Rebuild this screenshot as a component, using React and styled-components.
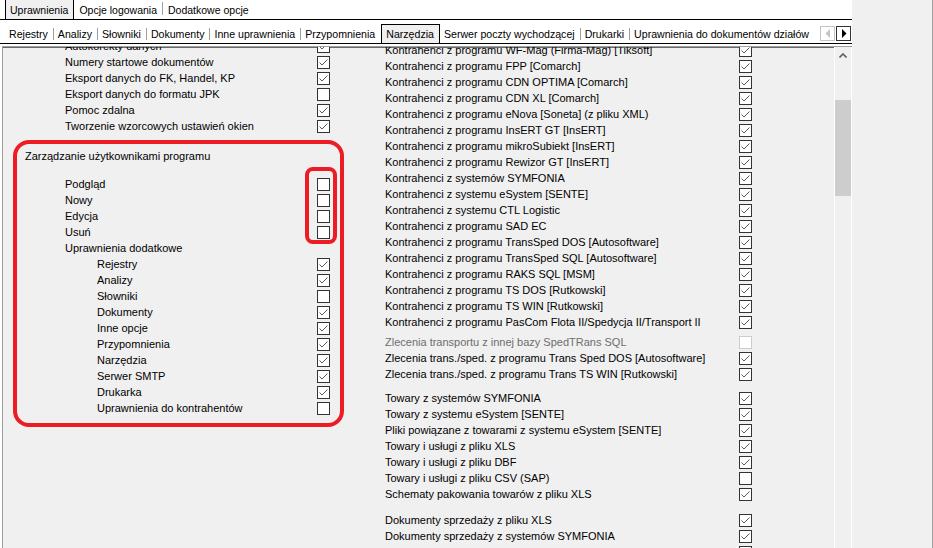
import React from "react";
import styled, { createGlobalStyle } from "styled-components";

const GlobalStyle = createGlobalStyle`
  html, body { margin: 0; padding: 0; background: #fff; }
  body {
    font-family: "Liberation Sans", Arial, sans-serif;
    font-size: 11px;
    color: #000;
  }
  #root { width: 933px; height: 548px; overflow: hidden; }
`;

const topTabs = ["Uprawnienia", "Opcje logowania", "Dodatkowe opcje"];
const subTabs = [
    "Rejestry",
    "Analizy",
    "Słowniki",
    "Dokumenty",
    "Inne uprawnienia",
    "Przypomnienia",
    "Narzędzia",
    "Serwer poczty wychodzącej",
    "Drukarki",
    "Uprawnienia do dokumentów działów",
];

const leftTop = [
    ["Autokorekty danych", true],
    ["Numery startowe dokumentów", true],
    ["Eksport danych do FK, Handel, KP", true],
    ["Eksport danych do formatu JPK", false],
    ["Pomoc zdalna", true],
    ["Tworzenie wzorcowych ustawień okien", true],
];

const basicRights = ["Podgląd", "Nowy", "Edycja", "Usuń"];

const extraRights = [
    ["Rejestry", true],
    ["Analizy", true],
    ["Słowniki", false],
    ["Dokumenty", true],
    ["Inne opcje", true],
    ["Przypomnienia", true],
    ["Narzędzia", true],
    ["Serwer SMTP", true],
    ["Drukarka", true],
    ["Uprawnienia do kontrahentów", false],
];

const K = "Kontrahenci z programu ";
const rightGroups = [
    {
        gap: 0,
        rows: [
            [K + "WF-Mag (Firma-Mag) [Tiksoft]", true],
            [K + "FPP [Comarch]", true],
            [K + "CDN OPTIMA [Comarch]", true],
            [K + "CDN XL [Comarch]", true],
            [K + "eNova [Soneta] (z pliku XML)", true],
            [K + "InsERT GT [InsERT]", true],
            [K + "mikroSubiekt [InsERT]", true],
            [K + "Rewizor GT [InsERT]", true],
            ["Kontrahenci z systemów SYMFONIA", true],
            ["Kontrahenci z systemu eSystem [SENTE]", true],
            ["Kontrahenci z systemu CTL Logistic", true],
            [K + "SAD EC", true],
            [K + "TransSped DOS [Autosoftware]", true],
            [K + "TransSped SQL [Autosoftware]", true],
            [K + "RAKS SQL [MSM]", true],
            [K + "TS DOS [Rutkowski]", true],
            [K + "TS WIN [Rutkowski]", true],
            [K + "PasCom Flota II/Spedycja II/Transport II", true],
        ],
    },
    {
        gap: 4,
        rows: [
            ["Zlecenia transportu z innej bazy SpedTRans SQL", false, true],
            ["Zlecenia trans./sped. z programu Trans Sped DOS [Autosoftware]", true],
            ["Zlecenia trans./sped. z programu Trans TS WIN [Rutkowski]", true],
        ],
    },
    {
        gap: 8,
        rows: [
            ["Towary z systemów SYMFONIA", true],
            ["Towary z systemu eSystem [SENTE]", true],
            ["Pliki powiązane z towarami z systemu eSystem [SENTE]", true],
            ["Towary i usługi z pliku XLS", true],
            ["Towary i usługi z pliku DBF", true],
            ["Towary i usługi z pliku CSV (SAP)", false],
            ["Schematy pakowania towarów z pliku XLS", true],
        ],
    },
    {
        gap: 10,
        rows: [
            ["Dokumenty sprzedaży z pliku XLS", true],
            ["Dokumenty sprzedaży z systemów SYMFONIA", true],
            ["Dokumenty sprzedaży z systemu eSystem [SENTE]", true],
        ],
    },
];

const Check = ({ checked, disabled }) => (
    <Box $disabled={disabled}>
        {checked && (
            <svg width="11" height="11" viewBox="0 0 11 11">
                <polyline
                    points="1.5,5.5 4,8 9.5,2.5"
                    fill="none"
                    stroke="#5a5a5a"
                    strokeWidth="1"
                />
            </svg>
        )}
    </Box>
);

const OptionRow = ({ label, indent, checked, disabled, noBox }) => (
    <Row $indent={indent} $disabled={disabled}>
        <Label>{label}</Label>
        {!noBox && <Check checked={checked} disabled={disabled} />}
    </Row>
);

const App = () => {
    return (
        <>
            <GlobalStyle />
            <Window>
                <Main>
                    <TopTabs>
                        {topTabs.map((t, i) => (
                            <React.Fragment key={t}>
                                {i > 1 && <Sep $tall />}
                                <Tab $active={i === 0}>{t}</Tab>
                            </React.Fragment>
                        ))}
                    </TopTabs>
                    <SubTabs>
                        <SubTabList>
                            {subTabs.map((t, i) => {
                                const active = t === "Narzędzia";
                                const prevActive = subTabs[i - 1] === "Narzędzia";
                                return (
                                    <React.Fragment key={t}>
                                        {i > 0 && !active && !prevActive && <Sep />}
                                        <SubTab $active={active}>{t}</SubTab>
                                    </React.Fragment>
                                );
                            })}
                        </SubTabList>
                        <Arrows>
                            <ArrowBtn $disabled>
                                <svg width="6" height="9" viewBox="0 0 6 9">
                                    <polygon points="5,0 5,9 0.5,4.5" fill="#c4c4c4" />
                                </svg>
                            </ArrowBtn>
                            <ArrowBtn>
                                <svg width="6" height="9" viewBox="0 0 6 9">
                                    <polygon points="1,0 1,9 5.5,4.5" fill="#000" />
                                </svg>
                            </ArrowBtn>
                        </Arrows>
                    </SubTabs>
                    <Panel>
                        <LeftCol>
                            {leftTop.map(([l, c]) => (
                                <OptionRow key={l} label={l} indent={62} checked={c} />
                            ))}
                            <Group>
                                <Header>Zarządzanie użytkownikami programu</Header>
                                {basicRights.map((l) => (
                                    <OptionRow key={l} label={l} indent={62} checked={false} />
                                ))}
                                <OptionRow label="Uprawnienia dodatkowe" indent={62} noBox />
                                {extraRights.map(([l, c]) => (
                                    <OptionRow key={l} label={l} indent={94} checked={c} />
                                ))}
                                <BigMark />
                                <SmallMark />
                            </Group>
                        </LeftCol>
                        <RightCol>
                            {rightGroups.map((g, gi) => (
                                <Block key={gi} $gap={g.gap}>
                                    {g.rows.map(([l, c, d]) => (
                                        <OptionRow key={l} label={l} indent={15} checked={c} disabled={d} />
                                    ))}
                                </Block>
                            ))}
                        </RightCol>
                        <Scrollbar>
                            <ScrollBtn>
                                <svg width="8" height="5" viewBox="0 0 8 5">
                                    <polyline
                                        points="0.5,4.5 4,1 7.5,4.5"
                                        fill="none"
                                        stroke="#606060"
                                        strokeWidth="1.6"
                                    />
                                </svg>
                            </ScrollBtn>
                            <Thumb />
                        </Scrollbar>
                    </Panel>
                </Main>
                <Side />
            </Window>
        </>
    );
};
export default App;

const Window = styled.div`
    display: flex;
    width: 933px;
    height: 548px;
    overflow: hidden;
`;
const Main = styled.div`
    width: 852px;
    display: flex;
    flex-direction: column;
    background: #fff;
`;
const Side = styled.div`
    flex: 1;
    background: #f0f0f0;
    border-right: 1px solid #a0a0a0;
`;
const TopTabs = styled.div`
    height: 19px;
    flex-shrink: 0;
    display: flex;
    align-items: stretch;
    padding-left: 5px;
    font-size: 10.5px;
    border-bottom: 1px solid #000;
`;
const Tab = styled.div`
    display: flex;
    align-items: center;
    padding: 1px 5px 0 5px;
    white-space: nowrap;
    ${(p) =>
        p.$active &&
        `
        background: #f0f0f0;
        border-left: 1px solid #000;
        border-right: 1px solid #000;
        padding: 1px 5px 0 4px;
    `}
`;
const Sep = styled.div`
    width: 1px;
    flex-shrink: 0;
    background: #a0a0a0;
    align-self: center;
    height: ${(p) => (p.$tall ? "13px" : "12px")};
    margin-top: ${(p) => (p.$tall ? "-2px" : "4px")};
`;
const SubTabs = styled.div`
    height: 23px;
    flex-shrink: 0;
    display: flex;
    align-items: stretch;
    padding-left: 5px;
    font-size: 10.6px;
    border-bottom: 1px solid #000;
`;
const SubTabList = styled.div`
    flex: 1;
    min-width: 0;
    display: flex;
    align-items: stretch;
    overflow: hidden;
`;
const SubTab = styled.div`
    display: flex;
    align-items: center;
    padding: 4px 5px 0 4px;
    white-space: nowrap;
    ${(p) =>
        p.$active &&
        `
        margin: 4px 0 0 1px;
        padding: 0 5px 0 4px;
        background: #f0f0f0;
        border: 1px solid #000;
        border-bottom: none;
    `}
`;
const Arrows = styled.div`
    display: flex;
    align-items: center;
    gap: 1px;
    padding: 4px 1px 0 4px;
`;
const ArrowBtn = styled.div`
    width: 13px;
    height: 13px;
    display: flex;
    align-items: center;
    justify-content: center;
    background: #fff;
    border: 1px solid ${(p) => (p.$disabled ? "#c4c4c4" : "#333")};
`;
const Panel = styled.div`
    flex: 1;
    min-height: 0;
    margin: 2px 0 0 2px;
    display: flex;
    overflow: hidden;
    background: #f0f0f0;
    border-top: 1px solid #a0a0a0;
    border-left: 1px solid #a0a0a0;
    box-shadow: inset 0 1px 0 #696969;
`;
const LeftCol = styled.div`
    width: 367px;
    flex-shrink: 0;
    box-sizing: border-box;
    padding-right: 40px;
    margin-top: -9px;
`;
const RightCol = styled.div`
    width: 464px;
    flex-shrink: 0;
    box-sizing: border-box;
    padding-right: 82px;
    margin-top: -5px;
`;
const Block = styled.div`
    margin-top: ${(p) => p.$gap}px;
`;
const Row = styled.div`
    height: 16px;
    display: flex;
    align-items: center;
    padding-left: ${(p) => p.$indent}px;
    color: ${(p) => (p.$disabled ? "#6d6d6d" : "#000")};
`;
const Label = styled.span`
    white-space: nowrap;
`;
const Box = styled.span`
    margin-left: auto;
    width: 13px;
    height: 13px;
    box-sizing: border-box;
    flex-shrink: 0;
    display: flex;
    align-items: center;
    justify-content: center;
    background: #fff;
    border: 1px solid ${(p) => (p.$disabled ? "#cccccc" : "#333")};
`;
const Group = styled.div`
    position: relative;
    margin-top: 14px;
`;
const Header = styled.div`
    height: 16px;
    display: flex;
    align-items: center;
    padding-left: 22px;
    margin-bottom: 12px;
`;
const BigMark = styled.div`
    position: absolute;
    left: 10px;
    top: -8px;
    width: 331px;
    height: 287px;
    box-sizing: border-box;
    border: 4px solid #ed1c24;
    border-radius: 16px;
    pointer-events: none;
`;
const SmallMark = styled.div`
    position: absolute;
    left: 302px;
    top: 19px;
    width: 32px;
    height: 77px;
    box-sizing: border-box;
    border: 4px solid #ed1c24;
    border-radius: 8px;
    pointer-events: none;
`;
const Scrollbar = styled.div`
    width: 18px;
    flex-shrink: 0;
    box-sizing: border-box;
    display: flex;
    flex-direction: column;
    background: #f0f0f0;
    border-left: 1px solid #fff;
    border-right: 1px solid #fff;
`;
const ScrollBtn = styled.div`
    height: 17px;
    display: flex;
    align-items: center;
    justify-content: center;
`;
const Thumb = styled.div`
    margin-top: 36px;
    height: 96px;
    background: #cdcdcd;
`;
